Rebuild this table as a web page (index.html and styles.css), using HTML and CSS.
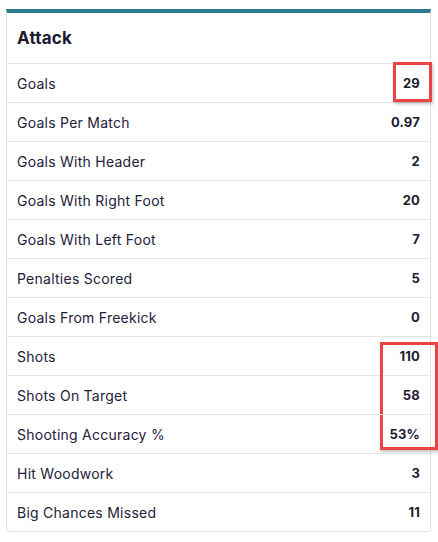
FILE: index.html
```html
<!DOCTYPE html>
<html>
<head>
<meta charset="utf-8">
<link rel="stylesheet" href="styles.css">
</head>
<body>
<div class="page">
  <div class="card">
    <div class="card-head">Attack</div>
    <div class="row"><span class="label">Goals</span><span class="value">29</span><span class="mark mark-one"></span></div>
    <div class="row"><span class="label">Goals Per Match</span><span class="value">0.97</span></div>
    <div class="row"><span class="label">Goals With Header</span><span class="value">2</span></div>
    <div class="row"><span class="label">Goals With Right Foot</span><span class="value">20</span></div>
    <div class="row"><span class="label">Goals With Left Foot</span><span class="value">7</span></div>
    <div class="row"><span class="label">Penalties Scored</span><span class="value">5</span></div>
    <div class="row"><span class="label">Goals From Freekick</span><span class="value">0</span></div>
    <div class="row"><span class="label">Shots</span><span class="value">110</span><span class="mark mark-three"></span></div>
    <div class="row"><span class="label">Shots On Target</span><span class="value">58</span></div>
    <div class="row"><span class="label">Shooting Accuracy %</span><span class="value">53%</span></div>
    <div class="row"><span class="label">Hit Woodwork</span><span class="value">3</span></div>
    <div class="row"><span class="label">Big Chances Missed</span><span class="value">11</span></div>
  </div>
</div>
</body>
</html>
```

FILE: styles.css
```css
html, body {
  margin: 0;
  padding: 0;
  background: #ffffff;
}
body {
  font-family: Inter, "Noto Sans", sans-serif;
  color: #1d1a2f;
}
.page {
  padding: 9px 7px 0 6px;
}
.card {
  border: 1px solid #e2e2e2;
  border-top: 4px solid #2b7c8c;
  border-radius: 0 0 4px 4px;
  background: #fff;
}
.card-head {
  height: 50px;
  display: flex;
  align-items: center;
  padding: 0 10px;
  font-size: 17px;
  font-weight: 700;
  letter-spacing: 0.2px;
  border-bottom: 1px solid #e2e2e2;
  box-sizing: content-box;
}
.row {
  position: relative;
  height: 38px;
  display: flex;
  align-items: center;
  justify-content: space-between;
  padding: 0 10px;
  border-bottom: 1px solid #e6e6e6;
  font-size: 14px;
}
.row:last-child {
  border-bottom: none;
}
.label {
  font-weight: 400;
  letter-spacing: 0.25px;
  color: #24203a;
}
.value {
  font-weight: 700;
  font-size: 13px;
  letter-spacing: 0.2px;
}
.mark {
  position: absolute;
  border: 3px solid #ea4446;
  box-shadow: 1px 2px 3px rgba(0,0,0,0.25);
  box-sizing: border-box;
}
.mark-one {
  left: 386px;
  top: -2px;
  width: 39px;
  height: 40px;
}
.mark-three {
  left: 373px;
  top: 5px;
  width: 58px;
  height: 108px;
}
```
